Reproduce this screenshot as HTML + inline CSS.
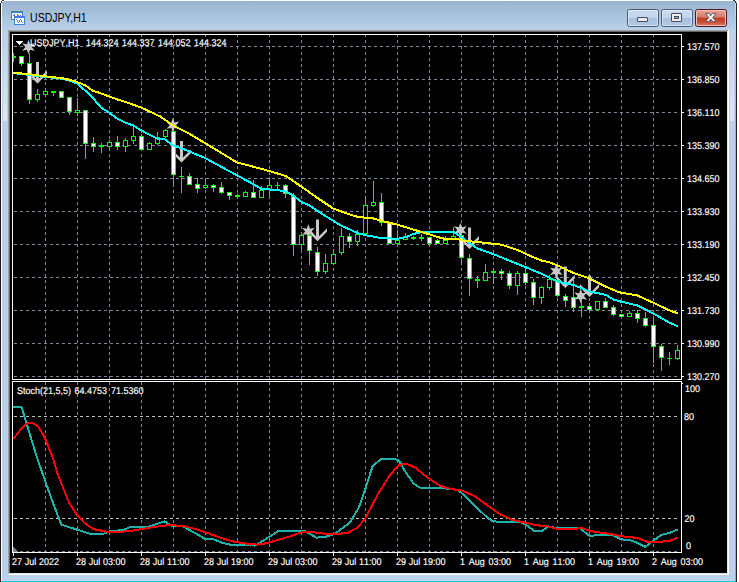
<!DOCTYPE html><html><head><meta charset="utf-8"><title>USDJPY,H1</title><style>
html,body{margin:0;padding:0;background:#fff;}
body{width:739px;height:582px;position:relative;overflow:hidden;font-family:"Liberation Sans",Arial,sans-serif;}
.a{position:absolute;}
</style></head><body>
<div class="a" style="left:0;top:0;width:737px;height:582px;background:#b9d1ea"></div>
<div class="a" style="left:2px;top:1px;width:733px;height:29px;background:linear-gradient(#99b4d1,#b9d1ea)"></div>
<div class="a" style="left:0;top:3px;width:1px;height:579px;background:#1e1e1e"></div>
<div class="a" style="left:1px;top:3px;width:1px;height:578px;background:#fff"></div>
<div class="a" style="left:4px;top:0;width:730px;height:1px;background:#fff"></div>
<div class="a" style="left:0;top:0;width:4px;height:1px;background:#fff"></div>
<div class="a" style="left:0;top:1px;width:1px;height:2px;background:#fff"></div>
<div class="a" style="left:2px;top:0;width:2px;height:1px;background:#333"></div>
<div class="a" style="left:1px;top:1px;width:1px;height:2px;background:#333"></div>
<div class="a" style="left:2px;top:1px;width:2px;height:1px;background:#e8eef5"></div>
<div class="a" style="left:735px;top:3px;width:1px;height:579px;background:linear-gradient(#a5e4f8,#4ad2f2 20%,#30cdec)"></div>
<div class="a" style="left:736px;top:3px;width:1px;height:579px;background:#222"></div>
<div class="a" style="left:734px;top:0;width:3px;height:1px;background:#fff"></div>
<div class="a" style="left:733px;top:0;width:2px;height:1px;background:#233"></div>
<div class="a" style="left:735px;top:1px;width:1px;height:2px;background:#233"></div>
<div class="a" style="left:736px;top:1px;width:1px;height:2px;background:#ddd"></div>
<div class="a" style="left:1px;top:581px;width:735px;height:1px;background:#22c8e2"></div>
<div class="a" style="left:2px;top:580px;width:733px;height:1px;background:#c6d0e8"></div>
<div class="a" style="left:734px;top:30px;width:1px;height:551px;background:#c6d0e8"></div>
<div class="a" style="left:3px;top:30px;width:4px;height:91px;background:linear-gradient(rgba(255,255,255,0),rgba(255,255,255,0.47))"></div>
<div class="a" style="left:730px;top:30px;width:4px;height:91px;background:linear-gradient(rgba(255,255,255,0),rgba(255,255,255,0.47))"></div>
<div class="a" style="left:8px;top:30px;width:721px;height:545px;background:#fff"></div>
<div class="a" style="left:8px;top:30px;width:720px;height:544px;background:#a0a0a0"></div>
<div class="a" style="left:9px;top:31px;width:719px;height:543px;background:#e3e3e3"></div>
<div class="a" style="left:9px;top:31px;width:718px;height:542px;background:#696969"></div>
<div class="a" style="left:10px;top:32px;width:717px;height:541px;background:#000"></div>
<div class="a" style="left:30px;top:10px;font-size:12px;line-height:16px;color:#000;white-space:nowrap;transform-origin:0 0;transform:scaleX(0.88)">USDJPY,H1</div>
<svg class="a" style="left:11px;top:11px" width="14" height="14" viewBox="0 0 14 14" shape-rendering="crispEdges"><rect x="0" y="0" width="12" height="9" fill="#3f7fff"/><rect x="1" y="2" width="10" height="6" fill="#fffff6"/><rect x="1" y="0" width="1" height="1" fill="#3f8f7f"/><rect x="1" y="8" width="1" height="1" fill="#3f8f7f"/><rect x="3" y="0" width="1" height="1" fill="#3f8f7f"/><rect x="3" y="8" width="1" height="1" fill="#3f8f7f"/><rect x="5" y="0" width="1" height="1" fill="#3f8f7f"/><rect x="5" y="8" width="1" height="1" fill="#3f8f7f"/><rect x="7" y="0" width="1" height="1" fill="#3f8f7f"/><rect x="7" y="8" width="1" height="1" fill="#3f8f7f"/><rect x="9" y="0" width="1" height="1" fill="#3f8f7f"/><rect x="9" y="8" width="1" height="1" fill="#3f8f7f"/><rect x="11" y="0" width="1" height="1" fill="#3f8f7f"/><rect x="11" y="8" width="1" height="1" fill="#3f8f7f"/><rect x="0" y="1" width="1" height="1" fill="#3f8f7f"/><rect x="11" y="1" width="1" height="1" fill="#3f8f7f"/><rect x="0" y="3" width="1" height="1" fill="#3f8f7f"/><rect x="11" y="3" width="1" height="1" fill="#3f8f7f"/><rect x="0" y="5" width="1" height="1" fill="#3f8f7f"/><rect x="11" y="5" width="1" height="1" fill="#3f8f7f"/><rect x="0" y="7" width="1" height="1" fill="#3f8f7f"/><rect x="11" y="7" width="1" height="1" fill="#3f8f7f"/><rect x="3" y="3" width="1" height="1" fill="#3f7fff"/><rect x="2" y="4" width="1" height="1" fill="#3f7fff"/><rect x="3" y="4" width="1" height="1" fill="#3f7fff"/><rect x="6" y="3" width="1" height="1" fill="#3f7fff"/><rect x="6" y="4" width="1" height="1" fill="#3f7fff"/><rect x="7" y="4" width="1" height="1" fill="#3f7fff"/><rect x="9" y="4" width="1" height="1" fill="#3f7fff"/><rect x="9" y="5" width="1" height="1" fill="#3f7fff"/><rect x="3" y="5" width="11" height="9" fill="#3f7fff"/><rect x="4" y="7" width="9" height="6" fill="#fffff6"/><rect x="4" y="5" width="1" height="1" fill="#3f8f7f"/><rect x="4" y="13" width="1" height="1" fill="#3f8f7f"/><rect x="6" y="5" width="1" height="1" fill="#3f8f7f"/><rect x="6" y="13" width="1" height="1" fill="#3f8f7f"/><rect x="8" y="5" width="1" height="1" fill="#3f8f7f"/><rect x="8" y="13" width="1" height="1" fill="#3f8f7f"/><rect x="10" y="5" width="1" height="1" fill="#3f8f7f"/><rect x="10" y="13" width="1" height="1" fill="#3f8f7f"/><rect x="12" y="5" width="1" height="1" fill="#3f8f7f"/><rect x="12" y="13" width="1" height="1" fill="#3f8f7f"/><rect x="3" y="6" width="1" height="1" fill="#3f8f7f"/><rect x="13" y="6" width="1" height="1" fill="#3f8f7f"/><rect x="3" y="8" width="1" height="1" fill="#3f8f7f"/><rect x="13" y="8" width="1" height="1" fill="#3f8f7f"/><rect x="3" y="10" width="1" height="1" fill="#3f8f7f"/><rect x="13" y="10" width="1" height="1" fill="#3f8f7f"/><rect x="3" y="12" width="1" height="1" fill="#3f8f7f"/><rect x="13" y="12" width="1" height="1" fill="#3f8f7f"/><rect x="5" y="8" width="1" height="1" fill="#3f7fff"/><rect x="6" y="9" width="1" height="1" fill="#3f7fff"/><rect x="6" y="10" width="1" height="1" fill="#3f7fff"/><rect x="7" y="11" width="1" height="1" fill="#3f7fff"/><rect x="8" y="10" width="1" height="1" fill="#3f7fff"/><rect x="8" y="9" width="1" height="1" fill="#3f7fff"/><rect x="9" y="8" width="1" height="1" fill="#3f7fff"/><rect x="10" y="9" width="1" height="1" fill="#3f7fff"/><rect x="10" y="10" width="1" height="1" fill="#3f7fff"/><rect x="11" y="11" width="1" height="1" fill="#3f7fff"/></svg>
<div class="a" style="left:627px;top:9px;width:30px;height:16px;border:1px solid #4e5d7c;border-radius:2.5px;background:linear-gradient(#c9dbf0 0%,#c0d4eb 47%,#a6c0de 50%,#b2c9e4 100%);box-shadow:inset 0 0 0 1px rgba(255,255,255,0.45)"></div>
<div class="a" style="left:661px;top:9px;width:30px;height:16px;border:1px solid #4e5d7c;border-radius:2.5px;background:linear-gradient(#c9dbf0 0%,#c0d4eb 47%,#a6c0de 50%,#b2c9e4 100%);box-shadow:inset 0 0 0 1px rgba(255,255,255,0.45)"></div>
<div class="a" style="left:695px;top:9px;width:30px;height:16px;border:1px solid #4b1522;border-radius:2.5px;background:linear-gradient(#e9a898 0%,#d4796a 45%,#c03c24 50%,#c94e36 75%,#d6806c 100%);box-shadow:inset 0 0 0 1px #f3c0b6"></div>
<div class="a" style="left:637px;top:17px;width:9px;height:3px;border:1px solid #414b63;border-radius:1px;background:#ececec"></div>
<div class="a" style="left:671px;top:13px;width:9px;height:7px;border:1px solid #414b63;border-radius:1px;background:#ececec"></div>
<div class="a" style="left:674px;top:16px;width:3px;height:1px;border:1px solid #414b63;background:#9fb4cf"></div>
<svg class="a" style="left:704px;top:12px" width="14" height="11" viewBox="0 0 14 11"><path d="M1.6 1.4 L4.8 1.4 L6.8 3.8 L8.8 1.4 L12 1.4 L8.7 5.5 L12 9.6 L8.8 9.6 L6.8 7.2 L4.8 9.6 L1.6 9.6 L4.9 5.5 Z" fill="#fff" stroke="#50506a" stroke-width="0.9" stroke-linejoin="round"/></svg>
<svg width="739" height="582" viewBox="0 0 739 582" style="position:absolute;left:0;top:0" shape-rendering="crispEdges">
<defs>
<pattern id="vd" x="0" y="4" width="1" height="6" patternUnits="userSpaceOnUse"><rect x="0" y="0" width="1" height="3" fill="#778899"/></pattern>
<pattern id="hd" x="2" y="0" width="6" height="1" patternUnits="userSpaceOnUse"><rect x="0" y="0" width="3" height="1" fill="#778899"/></pattern>
<pattern id="hs" x="2" y="0" width="6" height="1" patternUnits="userSpaceOnUse"><rect x="0" y="0" width="3" height="1" fill="#c0c0c0"/></pattern>
<clipPath id="cm"><rect x="13" y="35" width="668" height="344"/></clipPath>
<clipPath id="cs"><rect x="13" y="382" width="668" height="170"/></clipPath>
</defs>
<rect x="45" y="35" width="1" height="344" fill="url(#vd)"/>
<rect x="45" y="382" width="1" height="170" fill="url(#vd)"/>
<rect x="77" y="35" width="1" height="344" fill="url(#vd)"/>
<rect x="77" y="382" width="1" height="170" fill="url(#vd)"/>
<rect x="109" y="35" width="1" height="344" fill="url(#vd)"/>
<rect x="109" y="382" width="1" height="170" fill="url(#vd)"/>
<rect x="141" y="35" width="1" height="344" fill="url(#vd)"/>
<rect x="141" y="382" width="1" height="170" fill="url(#vd)"/>
<rect x="173" y="35" width="1" height="344" fill="url(#vd)"/>
<rect x="173" y="382" width="1" height="170" fill="url(#vd)"/>
<rect x="205" y="35" width="1" height="344" fill="url(#vd)"/>
<rect x="205" y="382" width="1" height="170" fill="url(#vd)"/>
<rect x="237" y="35" width="1" height="344" fill="url(#vd)"/>
<rect x="237" y="382" width="1" height="170" fill="url(#vd)"/>
<rect x="269" y="35" width="1" height="344" fill="url(#vd)"/>
<rect x="269" y="382" width="1" height="170" fill="url(#vd)"/>
<rect x="301" y="35" width="1" height="344" fill="url(#vd)"/>
<rect x="301" y="382" width="1" height="170" fill="url(#vd)"/>
<rect x="333" y="35" width="1" height="344" fill="url(#vd)"/>
<rect x="333" y="382" width="1" height="170" fill="url(#vd)"/>
<rect x="365" y="35" width="1" height="344" fill="url(#vd)"/>
<rect x="365" y="382" width="1" height="170" fill="url(#vd)"/>
<rect x="397" y="35" width="1" height="344" fill="url(#vd)"/>
<rect x="397" y="382" width="1" height="170" fill="url(#vd)"/>
<rect x="429" y="35" width="1" height="344" fill="url(#vd)"/>
<rect x="429" y="382" width="1" height="170" fill="url(#vd)"/>
<rect x="461" y="35" width="1" height="344" fill="url(#vd)"/>
<rect x="461" y="382" width="1" height="170" fill="url(#vd)"/>
<rect x="493" y="35" width="1" height="344" fill="url(#vd)"/>
<rect x="493" y="382" width="1" height="170" fill="url(#vd)"/>
<rect x="525" y="35" width="1" height="344" fill="url(#vd)"/>
<rect x="525" y="382" width="1" height="170" fill="url(#vd)"/>
<rect x="557" y="35" width="1" height="344" fill="url(#vd)"/>
<rect x="557" y="382" width="1" height="170" fill="url(#vd)"/>
<rect x="589" y="35" width="1" height="344" fill="url(#vd)"/>
<rect x="589" y="382" width="1" height="170" fill="url(#vd)"/>
<rect x="621" y="35" width="1" height="344" fill="url(#vd)"/>
<rect x="621" y="382" width="1" height="170" fill="url(#vd)"/>
<rect x="653" y="35" width="1" height="344" fill="url(#vd)"/>
<rect x="653" y="382" width="1" height="170" fill="url(#vd)"/>
<rect x="13" y="46" width="667" height="1" fill="url(#hd)"/>
<rect x="13" y="79" width="667" height="1" fill="url(#hd)"/>
<rect x="13" y="112" width="667" height="1" fill="url(#hd)"/>
<rect x="13" y="145" width="667" height="1" fill="url(#hd)"/>
<rect x="13" y="178" width="667" height="1" fill="url(#hd)"/>
<rect x="13" y="211" width="667" height="1" fill="url(#hd)"/>
<rect x="13" y="244" width="667" height="1" fill="url(#hd)"/>
<rect x="13" y="277" width="667" height="1" fill="url(#hd)"/>
<rect x="13" y="310" width="667" height="1" fill="url(#hd)"/>
<rect x="13" y="343" width="667" height="1" fill="url(#hd)"/>
<rect x="13" y="376" width="667" height="1" fill="url(#hd)"/>
<rect x="13" y="416" width="667" height="1" fill="url(#hs)"/>
<rect x="13" y="518" width="667" height="1" fill="url(#hs)"/>
<rect x="13" y="551" width="667" height="1" fill="url(#hd)"/>
<g fill="none" stroke="#fff" stroke-width="1">
<rect x="12.5" y="34.5" width="669" height="345"/>
<rect x="12.5" y="381.5" width="669" height="171"/>
</g>
<g fill="#fff">
<rect x="682" y="46" width="2" height="1"/>
<rect x="682" y="79" width="2" height="1"/>
<rect x="682" y="112" width="2" height="1"/>
<rect x="682" y="145" width="2" height="1"/>
<rect x="682" y="178" width="2" height="1"/>
<rect x="682" y="211" width="2" height="1"/>
<rect x="682" y="244" width="2" height="1"/>
<rect x="682" y="277" width="2" height="1"/>
<rect x="682" y="310" width="2" height="1"/>
<rect x="682" y="343" width="2" height="1"/>
<rect x="682" y="376" width="2" height="1"/>
<rect x="682" y="383" width="1" height="1"/>
<rect x="13" y="553" width="1" height="3"/>
<rect x="77" y="553" width="1" height="3"/>
<rect x="141" y="553" width="1" height="3"/>
<rect x="205" y="553" width="1" height="3"/>
<rect x="269" y="553" width="1" height="3"/>
<rect x="333" y="553" width="1" height="3"/>
<rect x="397" y="553" width="1" height="3"/>
<rect x="461" y="553" width="1" height="3"/>
<rect x="525" y="553" width="1" height="3"/>
<rect x="589" y="553" width="1" height="3"/>
<rect x="653" y="553" width="1" height="3"/>
</g>
<path d="M13 546.5 L18.5 552 L13 552 Z" fill="#778899" shape-rendering="auto"/>
<g clip-path="url(#cm)">
<g fill="#c8c8c8" shape-rendering="auto">
<polygon points="28.50,39.70 30.10,44.23 34.82,43.35 31.70,47.00 34.82,50.65 30.10,49.77 28.50,54.30 26.90,49.77 22.18,50.65 25.30,47.00 22.18,43.35 26.90,44.23"/>
<polygon points="172.90,117.90 174.50,122.43 179.22,121.55 176.10,125.20 179.22,128.85 174.50,127.97 172.90,132.50 171.30,127.97 166.58,128.85 169.70,125.20 166.58,121.55 171.30,122.43"/>
<polygon points="308.40,224.10 310.00,228.63 314.72,227.75 311.60,231.40 314.72,235.05 310.00,234.17 308.40,238.70 306.80,234.17 302.08,235.05 305.20,231.40 302.08,227.75 306.80,228.63"/>
<polygon points="460.40,222.70 462.00,227.23 466.72,226.35 463.60,230.00 466.72,233.65 462.00,232.77 460.40,237.30 458.80,232.77 454.08,233.65 457.20,230.00 454.08,226.35 458.80,227.23"/>
<polygon points="556.30,264.00 557.90,268.53 562.62,267.65 559.50,271.30 562.62,274.95 557.90,274.07 556.30,278.60 554.70,274.07 549.98,274.95 553.10,271.30 549.98,267.65 554.70,268.53"/>
<polygon points="580.70,288.80 582.30,293.33 587.02,292.45 583.90,296.10 587.02,299.75 582.30,298.87 580.70,303.40 579.10,298.87 574.38,299.75 577.50,296.10 574.38,292.45 579.10,293.33"/>
<rect x="36.0" y="62" width="3" height="18.5"/>
<polygon points="37.5,83.5 47.0,74.0 47.0,70.5 37.5,80.0 28.0,70.5 28.0,74.0"/>
<rect x="180.0" y="141" width="3" height="18.5"/>
<polygon points="181.5,162.5 191.0,153.0 191.0,149.5 181.5,159.0 172.0,149.5 172.0,153.0"/>
<rect x="316.0" y="219.5" width="3" height="18.69999999999999"/>
<polygon points="317.5,241.2 327.0,231.7 327.0,228.2 317.5,237.7 308.0,228.2 308.0,231.7"/>
<rect x="468.0" y="227.5" width="3" height="18.5"/>
<polygon points="469.5,249 479.0,239.5 479.0,236 469.5,245.5 460.0,236 460.0,239.5"/>
<rect x="563.8" y="266.5" width="3" height="18.5"/>
<polygon points="565.3,288 574.8,278.5 574.8,275 565.3,284.5 555.8,275 555.8,278.5"/>
<rect x="588.0" y="275.5" width="3" height="18.5"/>
<polygon points="589.5,297 599.0,287.5 599.0,284 589.5,293.5 580.0,284 580.0,287.5"/>
</g>
<rect x="13" y="53" width="1" height="9" fill="#00ff00"/>
<rect x="11" y="56" width="5" height="2" fill="#00ff00"/>
<rect x="21" y="56" width="1" height="10" fill="#00ff00"/>
<rect x="19" y="56" width="5" height="8" fill="#00ff00"/>
<rect x="20" y="57" width="3" height="6" fill="#fff"/>
<rect x="29" y="53" width="1" height="51" fill="#00ff00"/>
<rect x="27" y="63" width="5" height="37" fill="#00ff00"/>
<rect x="28" y="64" width="3" height="35" fill="#fff"/>
<rect x="37" y="89" width="1" height="13" fill="#00ff00"/>
<rect x="35" y="94" width="5" height="6" fill="#00ff00"/>
<rect x="36" y="95" width="3" height="4" fill="#000"/>
<rect x="45" y="88" width="1" height="9" fill="#00ff00"/>
<rect x="43" y="91" width="5" height="4" fill="#00ff00"/>
<rect x="44" y="92" width="3" height="2" fill="#000"/>
<rect x="53" y="91" width="1" height="5" fill="#00ff00"/>
<rect x="51" y="91" width="5" height="2" fill="#00ff00"/>
<rect x="61" y="91" width="1" height="7" fill="#00ff00"/>
<rect x="59" y="91" width="5" height="7" fill="#00ff00"/>
<rect x="60" y="92" width="3" height="5" fill="#fff"/>
<rect x="69" y="97" width="1" height="18" fill="#00ff00"/>
<rect x="67" y="97" width="5" height="15" fill="#00ff00"/>
<rect x="68" y="98" width="3" height="13" fill="#fff"/>
<rect x="77" y="98" width="1" height="18" fill="#00ff00"/>
<rect x="75" y="110" width="5" height="3" fill="#00ff00"/>
<rect x="76" y="111" width="3" height="1" fill="#000"/>
<rect x="85" y="110" width="1" height="49" fill="#00ff00"/>
<rect x="83" y="110" width="5" height="34" fill="#00ff00"/>
<rect x="84" y="111" width="3" height="32" fill="#fff"/>
<rect x="93" y="137" width="1" height="15" fill="#00ff00"/>
<rect x="91" y="143" width="5" height="4" fill="#00ff00"/>
<rect x="92" y="144" width="3" height="2" fill="#fff"/>
<rect x="101" y="143" width="1" height="10" fill="#00ff00"/>
<rect x="99" y="145" width="5" height="2" fill="#00ff00"/>
<rect x="109" y="140" width="1" height="8" fill="#00ff00"/>
<rect x="107" y="142" width="5" height="5" fill="#00ff00"/>
<rect x="108" y="143" width="3" height="3" fill="#000"/>
<rect x="117" y="136" width="1" height="14" fill="#00ff00"/>
<rect x="115" y="142" width="5" height="5" fill="#00ff00"/>
<rect x="116" y="143" width="3" height="3" fill="#fff"/>
<rect x="125" y="138" width="1" height="14" fill="#00ff00"/>
<rect x="123" y="140" width="5" height="7" fill="#00ff00"/>
<rect x="124" y="141" width="3" height="5" fill="#000"/>
<rect x="133" y="126" width="1" height="18" fill="#00ff00"/>
<rect x="131" y="136" width="5" height="5" fill="#00ff00"/>
<rect x="132" y="137" width="3" height="3" fill="#000"/>
<rect x="141" y="134" width="1" height="16" fill="#00ff00"/>
<rect x="139" y="136" width="5" height="14" fill="#00ff00"/>
<rect x="140" y="137" width="3" height="12" fill="#fff"/>
<rect x="149" y="142" width="1" height="8" fill="#00ff00"/>
<rect x="147" y="143" width="5" height="7" fill="#00ff00"/>
<rect x="148" y="144" width="3" height="5" fill="#000"/>
<rect x="157" y="132" width="1" height="13" fill="#00ff00"/>
<rect x="155" y="137" width="5" height="7" fill="#00ff00"/>
<rect x="156" y="138" width="3" height="5" fill="#000"/>
<rect x="165" y="129" width="1" height="9" fill="#00ff00"/>
<rect x="163" y="130" width="5" height="7" fill="#00ff00"/>
<rect x="164" y="131" width="3" height="5" fill="#000"/>
<rect x="173" y="131" width="1" height="53" fill="#00ff00"/>
<rect x="171" y="131" width="5" height="44" fill="#00ff00"/>
<rect x="172" y="132" width="3" height="42" fill="#fff"/>
<rect x="181" y="167" width="1" height="26" fill="#00ff00"/>
<rect x="179" y="176" width="5" height="1" fill="#00ff00"/>
<rect x="189" y="173" width="1" height="12" fill="#00ff00"/>
<rect x="187" y="176" width="5" height="9" fill="#00ff00"/>
<rect x="188" y="177" width="3" height="7" fill="#fff"/>
<rect x="197" y="178" width="1" height="15" fill="#00ff00"/>
<rect x="195" y="184" width="5" height="5" fill="#00ff00"/>
<rect x="196" y="185" width="3" height="3" fill="#fff"/>
<rect x="205" y="179" width="1" height="10" fill="#00ff00"/>
<rect x="203" y="185" width="5" height="3" fill="#00ff00"/>
<rect x="204" y="186" width="3" height="1" fill="#000"/>
<rect x="213" y="184" width="1" height="8" fill="#00ff00"/>
<rect x="211" y="185" width="5" height="3" fill="#00ff00"/>
<rect x="212" y="186" width="3" height="1" fill="#fff"/>
<rect x="221" y="182" width="1" height="12" fill="#00ff00"/>
<rect x="219" y="187" width="5" height="6" fill="#00ff00"/>
<rect x="220" y="188" width="3" height="4" fill="#fff"/>
<rect x="229" y="192" width="1" height="8" fill="#00ff00"/>
<rect x="227" y="192" width="5" height="4" fill="#00ff00"/>
<rect x="228" y="193" width="3" height="2" fill="#fff"/>
<rect x="237" y="194" width="1" height="5" fill="#00ff00"/>
<rect x="235" y="195" width="5" height="2" fill="#00ff00"/>
<rect x="245" y="191" width="1" height="6" fill="#00ff00"/>
<rect x="243" y="192" width="5" height="5" fill="#00ff00"/>
<rect x="244" y="193" width="3" height="3" fill="#000"/>
<rect x="253" y="180" width="1" height="18" fill="#00ff00"/>
<rect x="251" y="192" width="5" height="6" fill="#00ff00"/>
<rect x="252" y="193" width="3" height="4" fill="#fff"/>
<rect x="261" y="186" width="1" height="12" fill="#00ff00"/>
<rect x="259" y="190" width="5" height="8" fill="#00ff00"/>
<rect x="260" y="191" width="3" height="6" fill="#000"/>
<rect x="269" y="177" width="1" height="19" fill="#00ff00"/>
<rect x="267" y="185" width="5" height="5" fill="#00ff00"/>
<rect x="268" y="186" width="3" height="3" fill="#000"/>
<rect x="277" y="182" width="1" height="8" fill="#00ff00"/>
<rect x="275" y="185" width="5" height="1" fill="#00ff00"/>
<rect x="285" y="184" width="1" height="14" fill="#00ff00"/>
<rect x="283" y="185" width="5" height="9" fill="#00ff00"/>
<rect x="284" y="186" width="3" height="7" fill="#fff"/>
<rect x="293" y="193" width="1" height="63" fill="#00ff00"/>
<rect x="291" y="196" width="5" height="49" fill="#00ff00"/>
<rect x="292" y="197" width="3" height="47" fill="#fff"/>
<rect x="301" y="232" width="1" height="18" fill="#00ff00"/>
<rect x="299" y="235" width="5" height="10" fill="#00ff00"/>
<rect x="300" y="236" width="3" height="8" fill="#000"/>
<rect x="309" y="235" width="1" height="30" fill="#00ff00"/>
<rect x="307" y="235" width="5" height="16" fill="#00ff00"/>
<rect x="308" y="236" width="3" height="14" fill="#fff"/>
<rect x="317" y="247" width="1" height="29" fill="#00ff00"/>
<rect x="315" y="252" width="5" height="20" fill="#00ff00"/>
<rect x="316" y="253" width="3" height="18" fill="#fff"/>
<rect x="325" y="254" width="1" height="20" fill="#00ff00"/>
<rect x="323" y="263" width="5" height="9" fill="#00ff00"/>
<rect x="324" y="264" width="3" height="7" fill="#000"/>
<rect x="333" y="249" width="1" height="16" fill="#00ff00"/>
<rect x="331" y="254" width="5" height="10" fill="#00ff00"/>
<rect x="332" y="255" width="3" height="8" fill="#000"/>
<rect x="341" y="228" width="1" height="27" fill="#00ff00"/>
<rect x="339" y="236" width="5" height="17" fill="#00ff00"/>
<rect x="340" y="237" width="3" height="15" fill="#000"/>
<rect x="349" y="233" width="1" height="15" fill="#00ff00"/>
<rect x="347" y="236" width="5" height="6" fill="#00ff00"/>
<rect x="348" y="237" width="3" height="4" fill="#fff"/>
<rect x="357" y="230" width="1" height="16" fill="#00ff00"/>
<rect x="355" y="234" width="5" height="8" fill="#00ff00"/>
<rect x="356" y="235" width="3" height="6" fill="#000"/>
<rect x="365" y="196" width="1" height="38" fill="#00ff00"/>
<rect x="363" y="205" width="5" height="29" fill="#00ff00"/>
<rect x="364" y="206" width="3" height="27" fill="#000"/>
<rect x="373" y="181" width="1" height="26" fill="#00ff00"/>
<rect x="371" y="202" width="5" height="4" fill="#00ff00"/>
<rect x="372" y="203" width="3" height="2" fill="#000"/>
<rect x="381" y="193" width="1" height="33" fill="#00ff00"/>
<rect x="379" y="202" width="5" height="21" fill="#00ff00"/>
<rect x="380" y="203" width="3" height="19" fill="#fff"/>
<rect x="389" y="222" width="1" height="22" fill="#00ff00"/>
<rect x="387" y="223" width="5" height="21" fill="#00ff00"/>
<rect x="388" y="224" width="3" height="19" fill="#fff"/>
<rect x="397" y="230" width="1" height="14" fill="#00ff00"/>
<rect x="395" y="240" width="5" height="4" fill="#00ff00"/>
<rect x="396" y="241" width="3" height="2" fill="#000"/>
<rect x="405" y="233" width="1" height="7" fill="#00ff00"/>
<rect x="403" y="236" width="5" height="4" fill="#00ff00"/>
<rect x="404" y="237" width="3" height="2" fill="#000"/>
<rect x="413" y="236" width="1" height="4" fill="#00ff00"/>
<rect x="411" y="237" width="5" height="2" fill="#00ff00"/>
<rect x="421" y="234" width="1" height="7" fill="#00ff00"/>
<rect x="419" y="237" width="5" height="2" fill="#00ff00"/>
<rect x="429" y="237" width="1" height="8" fill="#00ff00"/>
<rect x="427" y="237" width="5" height="7" fill="#00ff00"/>
<rect x="428" y="238" width="3" height="5" fill="#fff"/>
<rect x="437" y="239" width="1" height="5" fill="#00ff00"/>
<rect x="435" y="240" width="5" height="4" fill="#00ff00"/>
<rect x="436" y="241" width="3" height="2" fill="#fff"/>
<rect x="445" y="236" width="1" height="8" fill="#00ff00"/>
<rect x="443" y="240" width="5" height="4" fill="#00ff00"/>
<rect x="444" y="241" width="3" height="2" fill="#000"/>
<rect x="453" y="227" width="1" height="12" fill="#00ff00"/>
<rect x="451" y="236" width="5" height="3" fill="#00ff00"/>
<rect x="452" y="237" width="3" height="1" fill="#000"/>
<rect x="461" y="235" width="1" height="30" fill="#00ff00"/>
<rect x="459" y="235" width="5" height="23" fill="#00ff00"/>
<rect x="460" y="236" width="3" height="21" fill="#fff"/>
<rect x="469" y="254" width="1" height="42" fill="#00ff00"/>
<rect x="467" y="258" width="5" height="21" fill="#00ff00"/>
<rect x="468" y="259" width="3" height="19" fill="#fff"/>
<rect x="477" y="276" width="1" height="12" fill="#00ff00"/>
<rect x="475" y="279" width="5" height="2" fill="#00ff00"/>
<rect x="485" y="264" width="1" height="17" fill="#00ff00"/>
<rect x="483" y="272" width="5" height="9" fill="#00ff00"/>
<rect x="484" y="273" width="3" height="7" fill="#000"/>
<rect x="493" y="269" width="1" height="15" fill="#00ff00"/>
<rect x="491" y="271" width="5" height="2" fill="#00ff00"/>
<rect x="501" y="269" width="1" height="11" fill="#00ff00"/>
<rect x="499" y="271" width="5" height="3" fill="#00ff00"/>
<rect x="500" y="272" width="3" height="1" fill="#fff"/>
<rect x="509" y="271" width="1" height="18" fill="#00ff00"/>
<rect x="507" y="273" width="5" height="13" fill="#00ff00"/>
<rect x="508" y="274" width="3" height="11" fill="#fff"/>
<rect x="517" y="271" width="1" height="24" fill="#00ff00"/>
<rect x="515" y="273" width="5" height="13" fill="#00ff00"/>
<rect x="516" y="274" width="3" height="11" fill="#000"/>
<rect x="525" y="268" width="1" height="17" fill="#00ff00"/>
<rect x="523" y="273" width="5" height="10" fill="#00ff00"/>
<rect x="524" y="274" width="3" height="8" fill="#fff"/>
<rect x="533" y="279" width="1" height="26" fill="#00ff00"/>
<rect x="531" y="282" width="5" height="16" fill="#00ff00"/>
<rect x="532" y="283" width="3" height="14" fill="#fff"/>
<rect x="541" y="286" width="1" height="18" fill="#00ff00"/>
<rect x="539" y="287" width="5" height="11" fill="#00ff00"/>
<rect x="540" y="288" width="3" height="9" fill="#000"/>
<rect x="549" y="275" width="1" height="15" fill="#00ff00"/>
<rect x="547" y="279" width="5" height="9" fill="#00ff00"/>
<rect x="548" y="280" width="3" height="7" fill="#000"/>
<rect x="557" y="280" width="1" height="17" fill="#00ff00"/>
<rect x="555" y="280" width="5" height="16" fill="#00ff00"/>
<rect x="556" y="281" width="3" height="14" fill="#fff"/>
<rect x="565" y="294" width="1" height="13" fill="#00ff00"/>
<rect x="563" y="296" width="5" height="5" fill="#00ff00"/>
<rect x="564" y="297" width="3" height="3" fill="#fff"/>
<rect x="573" y="280" width="1" height="32" fill="#00ff00"/>
<rect x="571" y="297" width="5" height="11" fill="#00ff00"/>
<rect x="572" y="298" width="3" height="9" fill="#fff"/>
<rect x="581" y="301" width="1" height="16" fill="#00ff00"/>
<rect x="579" y="306" width="5" height="2" fill="#00ff00"/>
<rect x="589" y="303" width="1" height="8" fill="#00ff00"/>
<rect x="587" y="306" width="5" height="4" fill="#00ff00"/>
<rect x="588" y="307" width="3" height="2" fill="#fff"/>
<rect x="597" y="301" width="1" height="10" fill="#00ff00"/>
<rect x="595" y="301" width="5" height="9" fill="#00ff00"/>
<rect x="596" y="302" width="3" height="7" fill="#000"/>
<rect x="605" y="298" width="1" height="10" fill="#00ff00"/>
<rect x="603" y="301" width="5" height="7" fill="#00ff00"/>
<rect x="604" y="302" width="3" height="5" fill="#fff"/>
<rect x="613" y="305" width="1" height="11" fill="#00ff00"/>
<rect x="611" y="307" width="5" height="8" fill="#00ff00"/>
<rect x="612" y="308" width="3" height="6" fill="#fff"/>
<rect x="621" y="314" width="1" height="3" fill="#00ff00"/>
<rect x="619" y="314" width="5" height="3" fill="#00ff00"/>
<rect x="620" y="315" width="3" height="1" fill="#fff"/>
<rect x="629" y="311" width="1" height="6" fill="#00ff00"/>
<rect x="627" y="313" width="5" height="4" fill="#00ff00"/>
<rect x="628" y="314" width="3" height="2" fill="#000"/>
<rect x="637" y="310" width="1" height="13" fill="#00ff00"/>
<rect x="635" y="313" width="5" height="6" fill="#00ff00"/>
<rect x="636" y="314" width="3" height="4" fill="#fff"/>
<rect x="645" y="312" width="1" height="15" fill="#00ff00"/>
<rect x="643" y="318" width="5" height="8" fill="#00ff00"/>
<rect x="644" y="319" width="3" height="6" fill="#fff"/>
<rect x="653" y="319" width="1" height="44" fill="#00ff00"/>
<rect x="651" y="325" width="5" height="22" fill="#00ff00"/>
<rect x="652" y="326" width="3" height="20" fill="#fff"/>
<rect x="661" y="344" width="1" height="27" fill="#00ff00"/>
<rect x="659" y="346" width="5" height="12" fill="#00ff00"/>
<rect x="660" y="347" width="3" height="10" fill="#fff"/>
<rect x="669" y="352" width="1" height="13" fill="#00ff00"/>
<rect x="667" y="358" width="5" height="1" fill="#00ff00"/>
<rect x="677" y="345" width="1" height="15" fill="#00ff00"/>
<rect x="675" y="350" width="5" height="9" fill="#00ff00"/>
<rect x="676" y="351" width="3" height="7" fill="#000"/>
<polyline points="13.0,73.1 29.0,74.8 45.0,76.9 61.0,78.6 69.0,80.4 77.0,83.5 85.0,90.4 93.0,98.0 101.0,107.5 109.0,112.5 117.0,118.6 125.0,122.6 133.0,125.3 141.0,130.3 149.0,134.5 157.0,138.6 165.0,139.4 173.5,146.0 181.0,148.0 205.0,158.0 237.5,175.6 253.5,184.2 261.5,189.0 277.5,190.0 285.7,191.6 293.5,195.6 301.5,202.0 309.4,205.4 325.4,216.0 341.5,225.8 357.5,233.0 365.7,235.3 373.5,236.6 381.5,238.1 397.5,238.8 405.4,237.3 413.5,234.0 421.5,232.0 453.5,232.0 461.5,237.0 469.4,243.2 477.5,248.5 493.5,254.2 509.7,260.7 525.7,267.2 541.5,273.8 557.5,281.6 573.5,285.0 589.7,291.5 605.7,294.8 613.5,299.5 621.6,301.8 637.5,305.5 653.4,313.6 669.7,322.8 677.9,326.2" fill="none" stroke="#00ffff" stroke-width="2" stroke-linejoin="round"/>
<polyline points="13.0,72.5 29.0,74.2 45.0,76.3 61.0,78.0 69.0,79.6 77.0,82.0 85.0,85.2 93.0,90.8 100.0,93.0 109.0,96.5 117.0,99.3 125.0,101.8 141.0,107.5 160.0,116.3 173.0,125.5 188.0,133.0 205.0,143.0 214.0,148.5 237.0,162.5 253.0,166.6 269.5,171.1 285.7,176.0 301.5,186.7 317.5,198.0 333.5,208.7 349.7,214.4 357.5,216.8 373.5,218.5 381.5,220.8 397.5,224.7 413.5,229.6 429.7,234.5 441.0,238.0 446.0,239.0 458.0,239.3 464.0,240.8 477.5,242.0 501.5,244.7 517.5,250.0 533.5,257.4 541.5,260.5 549.4,262.3 557.5,265.4 573.5,273.0 589.7,278.5 605.7,286.6 618.8,292.2 637.5,295.5 653.4,302.8 669.7,310.5 677.9,313.4" fill="none" stroke="#ffff00" stroke-width="2" stroke-linejoin="round"/>
</g>
<g clip-path="url(#cs)">
<polyline points="13.0,407.0 21.5,407.0 29.0,431.5 37.0,457.5 45.0,480.5 53.0,503.0 61.3,524.6 78.0,530.0 90.6,533.9 103.0,533.9 109.4,531.4 123.0,530.0 130.6,527.0 148.0,527.0 164.4,521.4 173.0,526.4 183.0,526.4 185.0,527.6 195.0,533.0 205.0,538.9 212.5,538.9 222.5,543.0 230.0,544.6 245.0,544.6 255.0,545.6 260.0,542.6 270.0,536.4 278.9,530.6 303.9,530.6 310.0,533.9 316.4,537.6 325.0,537.0 335.0,533.9 340.0,530.0 350.0,522.6 358.8,507.6 365.0,490.0 372.5,466.3 381.3,458.8 393.8,458.8 398.8,460.5 405.0,471.3 413.8,483.8 420.0,487.6 445.0,488.3 457.6,490.0 460.5,492.0 488.0,518.3 492.7,521.4 510.2,522.0 520.0,522.0 526.3,525.0 533.8,530.6 542.5,530.6 548.8,526.4 557.6,528.4 580.0,528.4 590.0,536.4 597.6,534.6 612.6,535.0 621.4,539.4 630.0,540.0 637.7,543.0 645.2,546.9 654.0,540.0 661.4,535.0 670.2,532.6 677.7,529.4" fill="none" stroke="#20b2aa" stroke-width="2" stroke-linejoin="round"/>
<polyline points="13.0,439.0 17.3,434.0 21.0,429.0 25.8,424.4 29.5,422.6 33.8,423.8 38.0,426.4 42.0,432.6 45.3,439.0 50.2,451.2 53.0,458.5 58.0,475.0 61.0,482.5 69.0,502.5 77.0,515.0 85.0,523.5 93.0,529.0 108.0,532.0 128.0,531.4 148.0,528.0 168.0,525.0 183.0,525.9 197.5,529.6 210.0,533.9 222.5,538.4 235.0,541.9 247.6,543.9 257.6,544.6 267.6,543.0 277.6,540.0 290.0,536.4 302.6,532.0 312.6,532.0 320.0,533.4 335.0,534.0 347.6,533.0 357.5,527.6 365.0,518.8 377.5,495.0 390.0,475.0 398.8,465.0 406.3,463.8 415.0,467.5 427.6,477.5 440.0,485.8 450.0,488.8 462.6,490.8 475.0,496.3 487.7,505.6 500.2,514.3 512.7,520.0 522.5,522.0 535.0,525.0 547.5,526.4 557.6,528.9 582.6,528.4 592.6,531.4 610.0,533.9 622.6,536.4 637.7,538.0 647.7,542.0 660.2,541.9 670.2,540.6 677.7,537.6" fill="none" stroke="#ff0000" stroke-width="2" stroke-linejoin="round"/>
</g>
<g fill="#fff" stroke="#fff" stroke-width="0.15" font-family="Liberation Sans, Arial, sans-serif" font-size="9px" style="font-kerning:none" shape-rendering="auto" text-rendering="geometricPrecision">
<path d="M16 41 H23 L19.5 45 Z" fill="#fff" shape-rendering="crispEdges"/>
<text transform="translate(30,46) scale(1,1.09)">USDJPY,H1</text>
<text transform="translate(86,46) scale(1,1.09)">144.324</text>
<text transform="translate(122,46) scale(1,1.09)">144.337</text>
<text transform="translate(158,46) scale(1,1.09)">144.052</text>
<text transform="translate(194,46) scale(1,1.09)">144.324</text>
<text transform="translate(17,394) scale(1,1.09)">Stoch(21,5,5)</text>
<text transform="translate(74.5,394) scale(1,1.09)">64.4753</text>
<text transform="translate(111,394) scale(1,1.09)">71.5360</text>
<text transform="translate(687,50) scale(1,1.09)">137.570</text>
<text transform="translate(687,83) scale(1,1.09)">136.850</text>
<text transform="translate(687,116) scale(1,1.09)">136.110</text>
<text transform="translate(687,149) scale(1,1.09)">135.390</text>
<text transform="translate(687,182) scale(1,1.09)">134.650</text>
<text transform="translate(687,215) scale(1,1.09)">133.930</text>
<text transform="translate(687,248) scale(1,1.09)">133.190</text>
<text transform="translate(687,281) scale(1,1.09)">132.450</text>
<text transform="translate(687,314) scale(1,1.09)">131.730</text>
<text transform="translate(687,347) scale(1,1.09)">130.990</text>
<text transform="translate(687,380) scale(1,1.09)">130.270</text>
<text transform="translate(685,392) scale(1,1.09)">100</text>
<text transform="translate(684,420) scale(1,1.09)">80</text>
<text transform="translate(684.5,522) scale(1,1.09)">20</text>
<text transform="translate(686,549) scale(1,1.09)">0</text>
<text transform="translate(12,565) scale(1,1.09)" style="word-spacing:0.2px">27 Jul 2022</text>
<text transform="translate(76,565) scale(1,1.09)" style="word-spacing:0.2px">28 Jul 03:00</text>
<text transform="translate(140,565) scale(1,1.09)" style="word-spacing:0.2px">28 Jul 11:00</text>
<text transform="translate(204,565) scale(1,1.09)" style="word-spacing:0.2px">28 Jul 19:00</text>
<text transform="translate(268,565) scale(1,1.09)" style="word-spacing:0.2px">29 Jul 03:00</text>
<text transform="translate(332,565) scale(1,1.09)" style="word-spacing:0.2px">29 Jul 11:00</text>
<text transform="translate(396,565) scale(1,1.09)" style="word-spacing:0.2px">29 Jul 19:00</text>
<text transform="translate(460,565) scale(1,1.09)" style="word-spacing:1.2px">1 Aug 03:00</text>
<text transform="translate(524,565) scale(1,1.09)" style="word-spacing:1.2px">1 Aug 11:00</text>
<text transform="translate(588,565) scale(1,1.09)" style="word-spacing:1.2px">1 Aug 19:00</text>
<text transform="translate(652,565) scale(1,1.09)" style="word-spacing:1.2px">2 Aug 03:00</text>
</g>
</svg>
</body></html>
